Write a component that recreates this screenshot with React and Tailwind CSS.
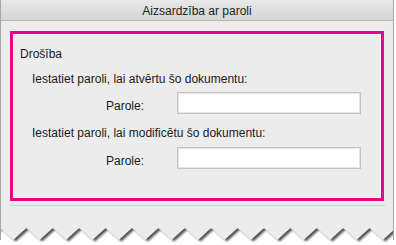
import React from 'react';

const TornEdge = () => {
  // zigzag bottom of the dialog: valleys (gray) at y=12, white tips at y=0
  const pts = [];
  const period = 26.4;
  for (let x = -13.2; x <= 410; x += period / 2) {
    const i = Math.round((x + 13.2) / (period / 2));
    pts.push(`${x.toFixed(1)},${i % 2 === 0 ? 12 : 0}`);
  }
  const paper = `0,-2 394,-2 ${pts.slice().reverse().join(' ')}`;
  return (
    <svg width="396" height="17" viewBox="0 0 396 17" className="block">
      <defs>
        <filter id="sh" x="-5%" y="-50%" width="110%" height="200%">
          <feGaussianBlur stdDeviation="1.1" />
        </filter>
        <clipPath id="win">
          <rect x="0" y="-2" width="394" height="20" />
        </clipPath>
      </defs>
      <g clipPath="url(#win)">
        <polygon points={paper} fill="#222" opacity="0.8" transform="translate(2.5 1.5)" filter="url(#sh)" />
        <polygon points={paper} fill="#ececec" />
        <line x1="0.5" y1="-2" x2="0.5" y2="12" stroke="#a6a6a6" />
        <line x1="393.5" y1="-2" x2="393.5" y2="12" stroke="#a6a6a6" />
      </g>
    </svg>
  );
};

const PasswordRow = ({ className }) => (
  <div className={`flex items-start ${className}`}>
    <span className="w-[71px] pl-[86px] box-content mt-[7px] leading-[14px]">Parole:</span>
    <div className="w-[184px] h-[22px] bg-white border border-[#c4c4c4] shadow-[inset_0_0_0_1px_#e6e6e6]" />
  </div>
);

export default function App() {
  return (
    <div className="w-[396px] h-[245px] bg-white overflow-hidden font-['Liberation_Sans',Arial,sans-serif] text-[12px] text-[#1a1a1a]">
      <div className="w-[394px] h-[228px] border-x border-[#a6a6a6] bg-[#ececec] flex flex-col">
        <div className="h-[21px] shrink-0 bg-gradient-to-b from-[#e9e9e9] to-[#d5d5d5] border-b border-[#b3b3b3] flex items-center justify-center">
          <span className="leading-[14px] pt-[1px] text-[#222]">Aizsardzība ar paroli</span>
        </div>
        <div className="ml-[9px] mt-[10px] w-[374px] border-[3px] border-[#ec008c]">
          <div className="border border-[#f7faf6] pl-[6px] pt-[12px] pb-[28px]">
            <div className="leading-[14px]">Drošība</div>
            <div className="leading-[14px] mt-[11px] pl-[12px]">Iestatiet paroli, lai atvērtu šo dokumentu:</div>
            <PasswordRow className="mt-[6px]" />
            <div className="leading-[14px] mt-[12px] pl-[12px]">Iestatiet paroli, lai modificētu šo dokumentu:</div>
            <PasswordRow className="mt-[7px]" />
          </div>
        </div>
        <div className="ml-[10px] mt-[4px] w-[374px] h-px bg-[#cdcdcd]" />
      </div>
      <TornEdge />
    </div>
  );
}
